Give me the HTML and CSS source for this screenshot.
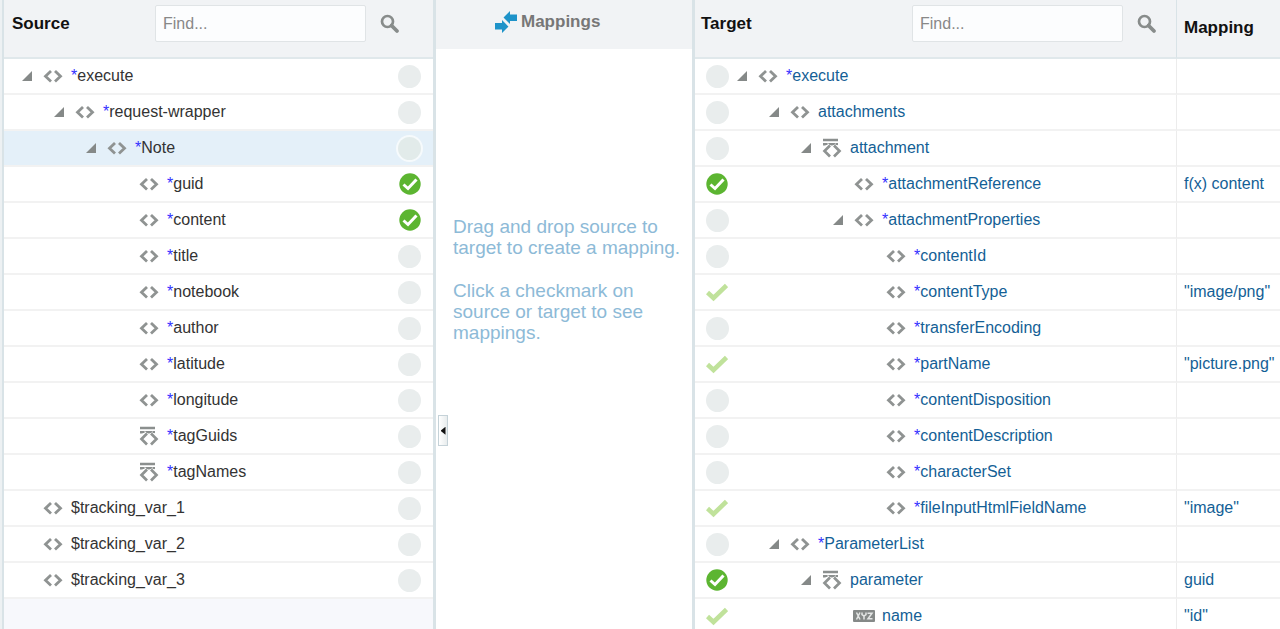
FILE: index.html
```
<!DOCTYPE html>
<html lang="en">
<head>
  <meta charset="utf-8">
  <title>Mapper</title>
  <link rel="stylesheet" href="styles.css">
</head>
<body>
  <!-- Shared icons -->
  <svg class="sprite" aria-hidden="true">
    <symbol id="i-element" viewBox="0 0 22 20">
      <path d="M9 5 3.500 10.300 9 15.500M13 5 18.500 10.300 13 15.500" fill="none" stroke="#8f9392" stroke-width="2.800"/>
    </symbol>
    <symbol id="i-repeat" viewBox="0 0 22 20">
      <path d="M2 2h15M2 6.200h15" fill="none" stroke="#8b8f8e" stroke-width="2.400"/>
      <path d="M8.500 6.500 3 13 8.500 18.500M13 6.500 18.500 13 13 18.500" fill="none" stroke="#fff" stroke-width="4.600"/>
      <path d="M2 6h4.500M8.500 6h1.500M12 6h1.500M14.500 6h2.500" fill="none" stroke="#8b8f8e" stroke-width="2"/>
      <path d="M9 7.500 3.500 13 9 18.500M13 7.500 18.500 13 13 18.500" fill="none" stroke="#8f9392" stroke-width="2.700"/>
    </symbol>
    <symbol id="i-attribute" viewBox="0 0 22 12">
      <rect width="22" height="12" rx="1" fill="#858988"/>
      <path d="M3.500 2.500 7 9.500M7 2.500 3.500 9.500M9 2.500v2l2 1.500 2-1.500v-2M11 6v3.500M14.500 3.200h4.500l-4 5.500h4.500" fill="none" stroke="#e4e6e5" stroke-width="1.500"/>
    </symbol>
    <symbol id="i-check" viewBox="0 0 22 22">
      <circle cx="11" cy="11" r="10.700" fill="#5cb531"/>
      <path d="M4.500 11.500 9 15.500 17.500 6.500" fill="none" stroke="#fff" stroke-width="3"/>
    </symbol>
    <symbol id="i-tick" viewBox="0 0 22 18">
      <path d="M1.500 9.500 7.500 15 20.500 2.500" fill="none" stroke="#c0e29b" stroke-width="4.600"/>
    </symbol>
    <symbol id="i-search" viewBox="0 0 20 20">
      <circle cx="7.500" cy="7.500" r="5.500" fill="none" stroke="#888c8b" stroke-width="2.700"/>
      <path d="m11.500 11.500 5.500 5.500" stroke="#888c8b" stroke-width="3.800" stroke-linecap="round"/>
    </symbol>
    <symbol id="i-mappings" viewBox="0 0 22 22">
      <path d="M8.500 6.500 15 0v3.500h7v6.500H15V13zM13.500 15.500 7 22V18.500H0V12H7V9z" fill="#1e93c9"/>
      <path d="m7.500 7 6.500 8" stroke="#f1f3f5" stroke-width="1.200"/>
    </symbol>
  </svg>

  <main class="mapper">
    <section class="panel source">
      <header class="panel-header">
        <h2>Source</h2>
        <input type="text" class="find" placeholder="Find..." aria-label="Find in source">
        <button type="button" class="search" aria-label="Search source"><svg><use href="#i-search"/></svg></button>
      </header>
      <table class="tree">
        <tbody>
          <tr><td><div class="node"><button type="button" class="toggle" aria-label="Collapse"></button><svg class="icon"><use href="#i-element"/></svg><span><b>*</b>execute</span></div></td><td class="status"><i class="dot"></i></td></tr>
          <tr><td><div class="node lvl-1"><button type="button" class="toggle" aria-label="Collapse"></button><svg class="icon"><use href="#i-element"/></svg><span><b>*</b>request-wrapper</span></div></td><td class="status"><i class="dot"></i></td></tr>
          <tr class="selected"><td><div class="node lvl-2"><button type="button" class="toggle" aria-label="Collapse"></button><svg class="icon"><use href="#i-element"/></svg><span><b>*</b>Note</span></div></td><td class="status"><i class="dot"></i></td></tr>
          <tr><td><div class="node leaf lvl-3"><svg class="icon"><use href="#i-element"/></svg><span><b>*</b>guid</span></div></td><td class="status"><svg class="mark"><use href="#i-check"/></svg></td></tr>
          <tr><td><div class="node leaf lvl-3"><svg class="icon"><use href="#i-element"/></svg><span><b>*</b>content</span></div></td><td class="status"><svg class="mark"><use href="#i-check"/></svg></td></tr>
          <tr><td><div class="node leaf lvl-3"><svg class="icon"><use href="#i-element"/></svg><span><b>*</b>title</span></div></td><td class="status"><i class="dot"></i></td></tr>
          <tr><td><div class="node leaf lvl-3"><svg class="icon"><use href="#i-element"/></svg><span><b>*</b>notebook</span></div></td><td class="status"><i class="dot"></i></td></tr>
          <tr><td><div class="node leaf lvl-3"><svg class="icon"><use href="#i-element"/></svg><span><b>*</b>author</span></div></td><td class="status"><i class="dot"></i></td></tr>
          <tr><td><div class="node leaf lvl-3"><svg class="icon"><use href="#i-element"/></svg><span><b>*</b>latitude</span></div></td><td class="status"><i class="dot"></i></td></tr>
          <tr><td><div class="node leaf lvl-3"><svg class="icon"><use href="#i-element"/></svg><span><b>*</b>longitude</span></div></td><td class="status"><i class="dot"></i></td></tr>
          <tr><td><div class="node leaf lvl-3"><svg class="icon"><use href="#i-repeat"/></svg><span><b>*</b>tagGuids</span></div></td><td class="status"><i class="dot"></i></td></tr>
          <tr><td><div class="node leaf lvl-3"><svg class="icon"><use href="#i-repeat"/></svg><span><b>*</b>tagNames</span></div></td><td class="status"><i class="dot"></i></td></tr>
          <tr><td><div class="node leaf"><svg class="icon"><use href="#i-element"/></svg><span>$tracking_var_1</span></div></td><td class="status"><i class="dot"></i></td></tr>
          <tr><td><div class="node leaf"><svg class="icon"><use href="#i-element"/></svg><span>$tracking_var_2</span></div></td><td class="status"><i class="dot"></i></td></tr>
          <tr><td><div class="node leaf"><svg class="icon"><use href="#i-element"/></svg><span>$tracking_var_3</span></div></td><td class="status"><i class="dot"></i></td></tr>
        </tbody>
      </table>
    </section>

    <section class="panel mappings">
      <header class="mappings-header">
        <svg><use href="#i-mappings"/></svg>
        <h2>Mappings</h2>
      </header>
      <div class="hint">
        <p>Drag and drop source to target to create a mapping.</p>
        <p>Click a checkmark on source or target to see mappings.</p>
      </div>
      <button type="button" class="splitter" aria-label="Collapse panel"></button>
    </section>

    <section class="panel target">
      <table class="tree">
        <thead>
          <tr>
            <th colspan="2">
              <div class="panel-header">
                <h2>Target</h2>
                <input type="text" class="find" placeholder="Find..." aria-label="Find in target">
                <button type="button" class="search" aria-label="Search target"><svg><use href="#i-search"/></svg></button>
              </div>
            </th>
            <th class="mapping">Mapping</th>
          </tr>
        </thead>
        <tbody>
          <tr><td class="status"><i class="dot"></i></td><td><div class="node"><button type="button" class="toggle" aria-label="Collapse"></button><svg class="icon"><use href="#i-element"/></svg><span><b>*</b>execute</span></div></td><td class="mapping"></td></tr>
          <tr><td class="status"><i class="dot"></i></td><td><div class="node lvl-1"><button type="button" class="toggle" aria-label="Collapse"></button><svg class="icon"><use href="#i-element"/></svg><span>attachments</span></div></td><td class="mapping"></td></tr>
          <tr><td class="status"><i class="dot"></i></td><td><div class="node lvl-2"><button type="button" class="toggle" aria-label="Collapse"></button><svg class="icon"><use href="#i-repeat"/></svg><span>attachment</span></div></td><td class="mapping"></td></tr>
          <tr><td class="status"><svg class="mark"><use href="#i-check"/></svg></td><td><div class="node leaf lvl-3"><svg class="icon"><use href="#i-element"/></svg><span><b>*</b>attachmentReference</span></div></td><td class="mapping">f(x) content</td></tr>
          <tr><td class="status"><i class="dot"></i></td><td><div class="node lvl-3"><button type="button" class="toggle" aria-label="Collapse"></button><svg class="icon"><use href="#i-element"/></svg><span><b>*</b>attachmentProperties</span></div></td><td class="mapping"></td></tr>
          <tr><td class="status"><i class="dot"></i></td><td><div class="node leaf lvl-4"><svg class="icon"><use href="#i-element"/></svg><span><b>*</b>contentId</span></div></td><td class="mapping"></td></tr>
          <tr><td class="status"><svg class="mark"><use href="#i-tick"/></svg></td><td><div class="node leaf lvl-4"><svg class="icon"><use href="#i-element"/></svg><span><b>*</b>contentType</span></div></td><td class="mapping">"image/png"</td></tr>
          <tr><td class="status"><i class="dot"></i></td><td><div class="node leaf lvl-4"><svg class="icon"><use href="#i-element"/></svg><span><b>*</b>transferEncoding</span></div></td><td class="mapping"></td></tr>
          <tr><td class="status"><svg class="mark"><use href="#i-tick"/></svg></td><td><div class="node leaf lvl-4"><svg class="icon"><use href="#i-element"/></svg><span><b>*</b>partName</span></div></td><td class="mapping">"picture.png"</td></tr>
          <tr><td class="status"><i class="dot"></i></td><td><div class="node leaf lvl-4"><svg class="icon"><use href="#i-element"/></svg><span><b>*</b>contentDisposition</span></div></td><td class="mapping"></td></tr>
          <tr><td class="status"><i class="dot"></i></td><td><div class="node leaf lvl-4"><svg class="icon"><use href="#i-element"/></svg><span><b>*</b>contentDescription</span></div></td><td class="mapping"></td></tr>
          <tr><td class="status"><i class="dot"></i></td><td><div class="node leaf lvl-4"><svg class="icon"><use href="#i-element"/></svg><span><b>*</b>characterSet</span></div></td><td class="mapping"></td></tr>
          <tr><td class="status"><svg class="mark"><use href="#i-tick"/></svg></td><td><div class="node leaf lvl-4"><svg class="icon"><use href="#i-element"/></svg><span><b>*</b>fileInputHtmlFieldName</span></div></td><td class="mapping">"image"</td></tr>
          <tr><td class="status"><i class="dot"></i></td><td><div class="node lvl-1"><button type="button" class="toggle" aria-label="Collapse"></button><svg class="icon"><use href="#i-element"/></svg><span><b>*</b>ParameterList</span></div></td><td class="mapping"></td></tr>
          <tr><td class="status"><svg class="mark"><use href="#i-check"/></svg></td><td><div class="node lvl-2"><button type="button" class="toggle" aria-label="Collapse"></button><svg class="icon"><use href="#i-repeat"/></svg><span>parameter</span></div></td><td class="mapping">guid</td></tr>
          <tr><td class="status"><svg class="mark"><use href="#i-tick"/></svg></td><td><div class="node leaf lvl-3"><svg class="icon"><use href="#i-attribute"/></svg><span>name</span></div></td><td class="mapping">"id"</td></tr>
        </tbody>
      </table>
    </section>
  </main>
</body>
</html>
```
FILE: styles.css
```
:root {
  --header-bg: #f1f3f5;
  --divider: #d9e3e7;
  --row-line: #f2f2f2;
  --dot: #e9eded;
  --text: #333;
  --link: #145f96;
}

* {
  box-sizing: border-box;
}

body {
  margin: 0;
  font-family: "Liberation Sans", Arial, sans-serif;
  font-size: 16px;
  line-height: 20px;
  color: var(--text);
  background: #fff;
}

button {
  padding: 0;
  border: 0;
  background: none;
  cursor: pointer;
}

h2 {
  margin: 0;
  font-size: 17px;
  font-weight: bold;
}

.sprite {
  position: absolute;
  width: 0;
  height: 0;
}

.mapper {
  display: grid;
  grid-template-columns: 434fr 256fr 588fr;
  height: 100vh;
  overflow: hidden;
  border-left: 2px solid #edf1f3;
}

.panel {
  min-width: 0;
  overflow: hidden;
}

.source {
  background: #f7f8fc;
  border-left: 2px solid var(--divider);
  border-right: 3px solid var(--divider);
}

.target {
  color: var(--link);
  border-left: 3px solid var(--divider);
}

/* Panel headers */
.panel-header {
  display: flex;
  align-items: center;
  height: 59px;
  padding: 0 33px 10px 8px;
  background: var(--header-bg);
  border-bottom: 2px solid #e0e8eb;
  color: #111;
}

.target .panel-header {
  height: 57px;
  padding: 0 19px 10px 6px;
  border-bottom: 0;
}

.find {
  width: 211px;
  height: 37px;
  margin-left: auto;
  padding: 0 7px;
  border: 1px solid #e0e4e6;
  border-radius: 2px;
  background: #fcfdfe;
  font: inherit;
  font-weight: normal;
  color: var(--text);
}

.find::placeholder {
  color: #888;
  opacity: 1;
}

.search {
  width: 20px;
  height: 20px;
  margin-left: 14px;
}

.search svg {
  display: block;
  width: 20px;
  height: 20px;
}

/* Trees */
.tree {
  width: 100%;
  border-collapse: separate;
  border-spacing: 0;
  background: #fff;
}

.tree td {
  height: 36px;
  padding: 0;
  border-bottom: 2px solid var(--row-line);
}

.tree th {
  padding: 0;
  text-align: left;
  background: var(--header-bg);
  border-bottom: 2px solid #e0e8eb;
}

.tree .mapping {
  width: 104px;
  padding-left: 7px;
  border-left: 1px solid #ececec;
  white-space: nowrap;
}

.tree th.mapping {
  padding-bottom: 2px;
  font-size: 17px;
  color: #111;
  border-left-color: var(--divider);
}

.selected {
  background: #e4f0f9;
}

.node {
  display: flex;
  align-items: center;
  white-space: nowrap;
}

.source .node {
  padding-left: 18px;
}

/* leaves have no toggle, keep its space */
.leaf::before {
  content: "";
  width: 20px;
}

.lvl-1 { margin-left: 32px; }
.lvl-2 { margin-left: 64px; }
.lvl-3 { margin-left: 96px; }
.lvl-4 { margin-left: 128px; }

.node b {
  font-weight: normal;
  color: #33f;
}

.toggle {
  width: 10px;
  height: 10px;
  margin-right: 10px;
  background: #858988;
  clip-path: polygon(100% 0, 100% 100%, 0 100%);
}

.icon {
  width: 22px;
  height: 20px;
  margin-right: 7px;
}

.tree .status {
  width: 42px;
  padding-left: 11px;
}

.source .tree .status {
  width: 35px;
  padding-left: 0;
}

.dot {
  display: block;
  width: 23px;
  height: 23px;
  border-radius: 50%;
  background: var(--dot);
}

.selected .dot {
  background: #e2ebea;
  box-shadow: 0 0 0 2px #f6fafc;
}

.mark {
  display: block;
  width: 22px;
  height: 22px;
}

.source .mark {
  margin-left: 1px;
}

/* Middle panel */
.mappings {
  position: relative;
}

.mappings-header {
  display: flex;
  align-items: center;
  gap: 4px;
  height: 49px;
  padding: 0 0 6px 59px;
  background: var(--header-bg);
  color: #777;
}

.mappings-header svg {
  width: 22px;
  height: 22px;
}

.hint {
  padding: 167px 4px 0 17px;
  font-size: 19px;
  line-height: 21px;
  color: #8dbad7;
}

.hint p {
  margin: 0 0 22px;
}

.splitter {
  position: absolute;
  top: 66%;
  left: 2px;
  width: 10px;
  height: 31px;
  border: 1px solid #c5d2d8;
  background: linear-gradient(to right, #fff, #e8eced);
}

.splitter::before {
  content: "";
  display: block;
  width: 5px;
  height: 8px;
  margin: 0 auto;
  background: #111;
  clip-path: polygon(0 50%, 100% 0, 100% 100%);
}
```
